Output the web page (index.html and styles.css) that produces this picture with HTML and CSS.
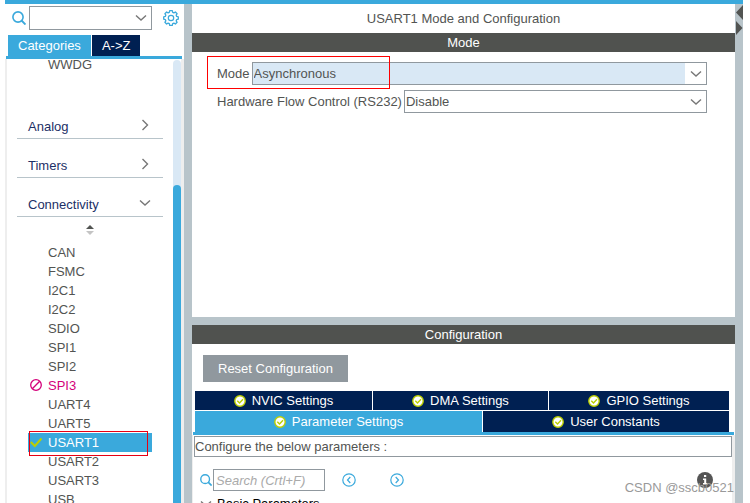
FILE: index.html
```html
<!DOCTYPE html>
<html lang="en">
<head>
<meta charset="utf-8">
<title>USART1 Mode and Configuration</title>
<link rel="stylesheet" href="styles.css">
</head>
<body>
<svg class="defs" aria-hidden="true">
  <symbol id="chevron-down" viewBox="0 0 12 8"><path d="M1 1.5 6 6l5-4.500" fill="none" stroke="currentColor" stroke-width="1.4"/></symbol>
  <symbol id="chevron-right" viewBox="0 0 8 12"><path d="M1.500 1 6.500 6l-5 5" fill="none" stroke="currentColor" stroke-width="1.4"/></symbol>
  <symbol id="search" viewBox="0 0 14 14"><circle cx="6" cy="6" r="5.100" fill="none" stroke="currentColor" stroke-width="1.6"/><path d="m9.500 9.500 4 4" stroke="currentColor" stroke-width="1.9"/></symbol>
  <symbol id="ok" viewBox="0 0 12 12"><circle cx="6" cy="6" r="5.200" fill="#fff" stroke="#bccf00" stroke-width="1.4"/><path d="m3.300 5.800 2.200 2.200 3.500-3.700" fill="none" stroke="#bccf00" stroke-width="1.4"/></symbol>
</svg>
<div class="app">
  <aside class="sidebar">
    <div class="finder">
      <svg class="finder-icon"><use href="#search"/></svg>
      <div class="combo">
        <select class="combo-field" aria-label="Search peripheral"><option></option></select>
        <svg class="combo-arrow"><use href="#chevron-down"/></svg>
      </div>
      <button class="gear" aria-label="Settings">
        <svg viewBox="0 0 16 16"><g fill="none" stroke="currentColor"><path stroke-width="1.300" stroke-linejoin="round" d="M6.700.700h2.600l.4 1.700 1.200.5 1.500-.9 1.700 1.700-.9 1.500.5 1.200 1.600.4v2.400l-1.600.4-.5 1.200.9 1.500-1.700 1.700-1.500-.9-1.200.5-.4 1.700H6.700l-.4-1.700-1.200-.5-1.500.9-1.700-1.700.9-1.500-.5-1.200L.7 9.200V6.800l1.600-.4.5-1.200-.9-1.500L3.600 2l1.500.9 1.200-.5z"/><circle cx="8" cy="8" r="2.700" stroke-width="1.200"/></g></svg>
      </button>
    </div>
    <div class="side-tabs">
      <button class="side-tab active">Categories</button>
      <button class="side-tab">A-&gt;Z</button>
    </div>
    <div class="tree">
      <div class="tree-content">
        <ul class="items first"><li class="item">WWDG</li></ul>
        <button class="group">Analog <svg class="arrow-right"><use href="#chevron-right"/></svg></button>
        <button class="group">Timers <svg class="arrow-right"><use href="#chevron-right"/></svg></button>
        <button class="group">Connectivity <svg class="arrow-down"><use href="#chevron-down"/></svg></button>
        <div class="sorter"><svg viewBox="0 0 8 10"><path d="M0 4 4 0l4 4z" fill="#525452"/><path d="M0 6h8l-4 4z" fill="#c4c4c4"/></svg></div>
        <ul class="items">
          <li class="item">CAN</li>
          <li class="item">FSMC</li>
          <li class="item">I2C1</li>
          <li class="item">I2C2</li>
          <li class="item">SDIO</li>
          <li class="item">SPI1</li>
          <li class="item">SPI2</li>
          <li class="item conflict"><svg class="status" viewBox="0 0 12 12"><g fill="none" stroke="currentColor" stroke-width="1.300"><circle cx="6" cy="6" r="5.300"/><path d="m2.300 9.700 7.400-7.400"/></g></svg>SPI3</li>
          <li class="item">UART4</li>
          <li class="item">UART5</li>
          <li class="item selected"><svg class="status" viewBox="0 0 12 12"><path d="m.800 6 4 4 6.700-7.500" fill="none" stroke="#bccf00" stroke-width="2"/></svg>USART1</li>
          <li class="item">USART2</li>
          <li class="item">USART3</li>
          <li class="item">USB</li>
        </ul>
      </div>
      <div class="track"><div class="thumb"></div></div>
    </div>
  </aside>
  <div class="splitter"></div>
  <main class="main">
    <section class="pane">
      <h1 class="title">USART1 Mode and Configuration</h1>
      <h2 class="bar">Mode</h2>
      <div class="mode-form">
        <div class="row marked">
          <label for="mode">Mode</label>
          <div class="combo">
            <select id="mode" class="combo-field tinted"><option>Asynchronous</option></select>
            <svg class="combo-arrow"><use href="#chevron-down"/></svg>
          </div>
        </div>
        <div class="row">
          <label for="flow">Hardware Flow Control (RS232)</label>
          <div class="combo">
            <select id="flow" class="combo-field"><option>Disable</option></select>
            <svg class="combo-arrow"><use href="#chevron-down"/></svg>
          </div>
        </div>
      </div>
    </section>
    <section class="pane config">
      <h2 class="bar">Configuration</h2>
      <button class="reset">Reset Configuration</button>
      <div class="tabs">
        <div class="tab-row upper">
          <button class="tab"><svg><use href="#ok"/></svg>NVIC Settings</button>
          <button class="tab"><svg><use href="#ok"/></svg>DMA Settings</button>
          <button class="tab"><svg><use href="#ok"/></svg>GPIO Settings</button>
        </div>
        <div class="tab-row lower">
          <button class="tab active"><svg><use href="#ok"/></svg>Parameter Settings</button>
          <button class="tab"><svg><use href="#ok"/></svg>User Constants</button>
        </div>
      </div>
      <div class="sheet">
        <p class="hint">Configure the below parameters :</p>
        <div class="toolbar">
          <svg class="tool-search"><use href="#search"/></svg>
          <input class="query" type="text" aria-label="Search parameters" placeholder="Search (Crtl+F)">
          <button class="step" aria-label="Previous"><svg viewBox="0 0 14 14"><circle cx="7" cy="7" r="6.200"/><path d="M8.300 4 5.500 7l2.800 3"/></svg></button>
          <button class="step" aria-label="Next"><svg viewBox="0 0 14 14"><circle cx="7" cy="7" r="6.200"/><path d="M5.700 4 8.500 7l-2.800 3"/></svg></button>
          <button class="info" aria-label="Information"><svg viewBox="0 0 16 16"><circle cx="8" cy="8" r="8" fill="#555"/><path d="M7 3h2.200v2H7zM6 6.500h3.200V11H10.500v1.500H6V11h1.200V8H6z" fill="#fff"/></svg></button>
        </div>
        <div class="params"><svg class="arrow-down"><use href="#chevron-down"/></svg>Basic Parameters</div>
        <div class="sheet-thumb"></div>
      </div>
      <span class="credit">CSDN @sscb0521</span>
    </section>
  </main>
  <div class="splitter edge">
    <svg viewBox="0 0 8 32"><path d="M8 1v15L1 8.500zM1 17v14l6.500-7z" fill="#525452"/></svg>
  </div>
</div>
</body>
</html>
```
FILE: styles.css
```css
:root {
  --blue: #3aa9dc;
  --navy: #002052;
  --dark: #50524f;
  --grey: #b8c4ca;
  --border: #90989e;
  --pale: #d9e8f5;
}

* {
  box-sizing: border-box;
}

body {
  margin: 0;
  background: #fff;
  color: #525452;
  font: 13px/16px "Liberation Sans", Arial, sans-serif;
}

button,
select,
input {
  margin: 0;
  padding: 0;
  border: 0;
  border-radius: 0;
  background: none;
  color: inherit;
  font: inherit;
}

h1,
h2,
p,
ul {
  margin: 0;
  padding: 0;
  font: inherit;
  list-style: none;
}

svg {
  display: block;
  flex: none;
}

.defs {
  display: none;
}

.app {
  display: flex;
  height: 100vh;
  margin: 0 7px 0 5px;
  border-top: 4px solid var(--blue);
  overflow: hidden;
}

.splitter {
  flex: none;
  width: 8px;
  background: var(--grey);
}

.sidebar {
  display: flex;
  flex-direction: column;
  flex: none;
  width: 179px;
}

.finder {
  display: flex;
  align-items: center;
  gap: 3px;
  padding: 2px 5px 0 7px;
}

.finder-icon {
  width: 14px;
  height: 14px;
  color: var(--blue);
}

.combo {
  position: relative;
  flex: 1;
  height: 23px;
}

.finder .combo {
  height: 24px;
}

.combo-field {
  display: block;
  width: 100%;
  height: 100%;
  padding-left: 1px;
  border: 1px solid var(--border);
  background: #fff;
  appearance: none;
}

.tinted {
  background: linear-gradient(to left, #fff 21px, var(--pale) 21px);
}

.combo-arrow {
  position: absolute;
  top: 8px;
  right: 5px;
  width: 12px;
  height: 8px;
  color: #777;
  pointer-events: none;
}

.gear {
  width: 16px;
  height: 16px;
  margin-left: 8px;
  color: var(--blue);
}

.side-tabs {
  display: flex;
  gap: 1px;
  margin: 5px 2px 0 1px;
  padding-left: 2px;
  border-bottom: 3px solid var(--blue);
}

.side-tab {
  height: 21px;
  padding: 0 10px;
  background: var(--navy);
  color: #fff;
}

.side-tab.active {
  background: var(--blue);
}

.tree {
  display: flex;
  flex: 1;
  min-height: 0;
  border: solid #eee;
  border-width: 0 3px 0 2px;
  overflow: hidden;
}

.tree-content {
  flex: 1;
  padding: 0 10px;
  margin-top: -4px;
}

.first {
  margin-bottom: 26px;
}

.item {
  position: relative;
  height: 19px;
  margin: 0 11px;
  padding-left: 20px;
  line-height: 19px;
}

.status {
  position: absolute;
  top: 3px;
  left: 2px;
  width: 12px;
  height: 12px;
}

.conflict {
  color: #d4007a;
}

.selected {
  background: var(--blue);
  color: #fff;
}

.selected::after {
  content: "";
  position: absolute;
  z-index: 1;
  inset: -2px 4px -4px 1px;
  border: 1px solid #e60012;
}

.group {
  display: flex;
  align-items: flex-end;
  justify-content: space-between;
  width: 100%;
  height: 39px;
  padding: 0 12px 3px 11px;
  border-bottom: 1px solid var(--grey);
  color: #1c2f66;
}

.arrow-right {
  width: 8px;
  height: 12px;
  margin: 0 2px 4px;
  color: #777;
}

.arrow-down {
  width: 12px;
  height: 8px;
  margin-bottom: 6px;
  color: #777;
}

.sorter {
  display: flex;
  align-items: center;
  justify-content: center;
  height: 26px;
  padding-right: 1px;
}

.sorter svg {
  width: 8px;
  height: 10px;
}

.track {
  width: 8px;
  margin-top: 1px;
  padding-top: 125px;
  border-radius: 4px 4px 0 0;
  background: var(--pale);
}

.thumb {
  height: 100%;
  border-radius: 4px 4px 0 0;
  background: var(--blue);
}

.main {
  display: grid;
  flex: 1;
  grid-template-rows: minmax(0, 313fr) minmax(0, 178fr);
  gap: 8px;
  min-width: 0;
  background: var(--grey);
}

.pane {
  position: relative;
  background: #fff;
}

.title {
  padding: 7px 0 6px;
  text-align: center;
}

.bar {
  height: 19px;
  background: var(--dark);
  color: #fff;
  line-height: 19px;
  text-align: center;
}

.mode-form {
  display: grid;
  gap: 5px;
  padding: 10px 28px 0 25px;
}

.row {
  position: relative;
  display: flex;
  align-items: center;
  gap: 2px;
}

.marked::after {
  content: "";
  position: absolute;
  top: -6px;
  bottom: -4px;
  left: -10px;
  width: 181px;
  border: 1px solid #f00;
  pointer-events: none;
}

.config {
  display: flex;
  flex-direction: column;
  overflow: hidden;
}

.reset {
  flex: none;
  align-self: flex-start;
  height: 27px;
  margin: 11px 0 9px 11px;
  padding: 0 15px;
  background: var(--border);
  color: #fff;
}

.tabs {
  display: grid;
  flex: none;
  gap: 1px;
  margin: 0 1px;
  padding: 0 5px 0 2px;
  border-bottom: 3px solid var(--blue);
}

.tab-row {
  display: grid;
  gap: 1px;
}

.upper {
  grid-template-columns: 177fr 175fr 180fr;
}

.lower {
  grid-template-columns: 287fr 246fr;
}

.tab {
  display: flex;
  align-items: center;
  justify-content: center;
  gap: 6px;
  height: 19px;
  background: var(--navy);
  color: #fff;
}

.lower .tab {
  height: 21px;
}

.tab.active {
  background: var(--blue);
}

.tab svg {
  width: 12px;
  height: 12px;
}

.sheet {
  position: relative;
  flex: 1;
  padding: 1px 0 0 1px;
  border: solid #eee;
  border-width: 0 3px 0 1px;
}

.hint {
  height: 21px;
  border: 1px solid var(--border);
  line-height: 19px;
}

.toolbar {
  display: flex;
  align-items: center;
  padding: 12px 19px 0 6px;
}

.tool-search {
  width: 12px;
  height: 12px;
  margin-right: 1px;
  color: var(--blue);
}

.query {
  width: 112px;
  height: 22px;
  padding: 0 2px;
  border: 1px solid var(--border);
  font-style: italic;
}

.query::placeholder {
  color: #aaa;
  opacity: 1;
}

.step {
  width: 14px;
  height: 14px;
  margin-left: 17px;
}

.step + .step {
  margin-left: 34px;
}

.step svg {
  fill: none;
  stroke: var(--blue);
  stroke-width: 1.2;
}

.info {
  width: 16px;
  height: 16px;
  margin-left: auto;
}

.params {
  display: flex;
  align-items: center;
  gap: 5px;
  padding: 5px 0 0 6px;
  color: #000;
}

.params .arrow-down {
  margin: 0;
}

.sheet-thumb {
  position: absolute;
  right: 3px;
  bottom: 0;
  width: 8px;
  height: 8px;
  border-radius: 4px 4px 0 0;
  background: var(--blue);
}

.credit {
  position: absolute;
  right: 1px;
  bottom: 7px;
  color: #999;
}

.edge svg {
  width: 8px;
  height: 32px;
}
```
